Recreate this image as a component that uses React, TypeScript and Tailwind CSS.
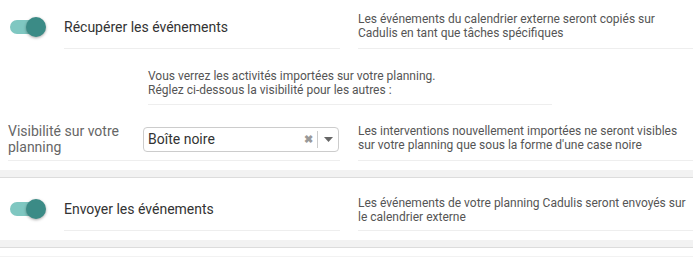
import type { ReactNode } from 'react';

function Toggle() {
    // interrupteur activé : piste claire + bouton foncé à droite
    return (
        <div className="relative h-[20px] w-[36px]">
            <div className="absolute left-0 top-[3px] h-[14px] w-[32px] rounded-full bg-[#7fc7c1]" />
            <div className="absolute right-0 top-0 h-[20px] w-[20px] rounded-full bg-[#3b8b86] shadow-[0_1px_3px_rgba(0,0,0,0.35)]" />
        </div>
    );
}

function Description({ children, className = '' }: { children: ReactNode; className?: string }) {
    return (
        <div className={`border-b border-[#eeeeee] text-[12px] leading-[14px] text-[#555] ${className}`}>
            {children}
        </div>
    );
}

function SelectBox() {
    return (
        <div className="flex h-[25px] w-[196px] items-center rounded-[4px] border border-[#cccccc] bg-white">
            <span className="flex-1 pl-[4px] text-[14px] text-[#333]">Boîte noire</span>
            <span className="w-[17px] text-center text-[11px] font-bold leading-none text-[#999]">✖</span>
            <span className="h-[17px] w-px bg-[#cccccc]" />
            <span className="flex w-[20px] justify-center">
                <svg width="9" height="5" viewBox="0 0 9 5">
                    <path d="M0 0 L9 0 L4.5 5 Z" fill="#666" />
                </svg>
            </span>
        </div>
    );
}

export default function App() {
    return (
        <div className="h-[257px] overflow-hidden bg-[#f2f2f2] font-['Roboto',sans-serif]">
            {/* Bloc : récupérer les événements */}
            <div className="h-[170px] bg-white">
                <div className="grid grid-cols-[340px_1fr] gap-x-[18px]">
                    <div className="flex items-start">
                        <div className="w-[64px] pl-[10px] pt-[17px]">
                            <Toggle />
                        </div>
                        <div className="flex-1 border-b border-[#eeeeee] pb-[12px] pt-[18px] text-[14px] leading-[18px] text-[#333]">
                            Récupérer les événements
                        </div>
                    </div>
                    <Description className="pb-[8px] pt-[12px]">
                        Les événements du calendrier externe seront copiés sur
                        <br />
                        Cadulis en tant que tâches spécifiques
                    </Description>
                </div>

                <div className="ml-[148px] w-[404px] border-b border-[#eeeeee] pb-[7px] pt-[20px] text-[12px] leading-[14px] text-[#555]">
                    Vous verrez les activités importées sur votre planning.
                    <br />
                    Réglez ci-dessous la visibilité pour les autres :
                </div>

                <div className="grid grid-cols-[340px_1fr] gap-x-[18px]">
                    <div className="ml-[8px] flex items-center border-b border-[#eeeeee] pb-[5px] pt-[18px]">
                        <div className="w-[135px] text-[14px] leading-[16px] text-[#666]">
                            Visibilité sur votre
                            <br />
                            planning
                        </div>
                        <SelectBox />
                    </div>
                    <Description className="pb-[8px] pt-[19px]">
                        Les interventions nouvellement importées ne seront visibles
                        <br />
                        sur votre planning que sous la forme d'une case noire
                    </Description>
                </div>
            </div>

            {/* Bloc : envoyer les événements */}
            <div className="mt-[7px] border-t border-[#dcdcdc] bg-white pb-[9px]">
                <div className="grid grid-cols-[340px_1fr] gap-x-[18px]">
                    <div className="flex items-start">
                        <div className="w-[64px] pl-[10px] pt-[21px]">
                            <Toggle />
                        </div>
                        <div className="flex-1 border-b border-[#eeeeee] pb-[12px] pt-[22px] text-[14px] leading-[18px] text-[#333]">
                            Envoyer les événements
                        </div>
                    </div>
                    <Description className="pb-[6px] pt-[18px]">
                        Les événements de votre planning Cadulis seront envoyés sur
                        <br />
                        le calendrier externe
                    </Description>
                </div>
            </div>

            <div className="mt-[7px] h-[9px] border-t border-[#dcdcdc] bg-white" />
        </div>
    );
}
